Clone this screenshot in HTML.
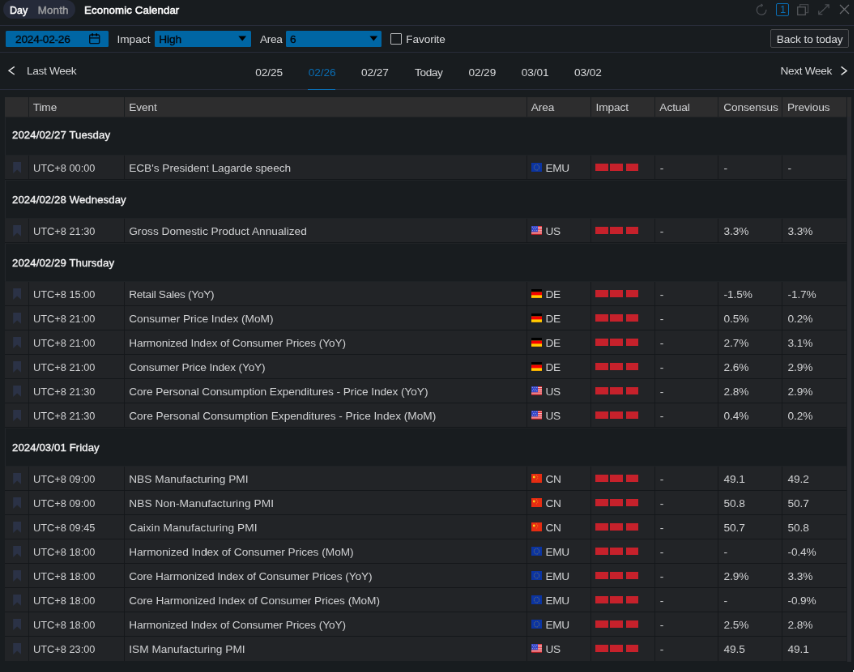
<!DOCTYPE html>
<html lang="en">
<head>
<meta charset="utf-8">
<title>Economic Calendar</title>
<style>
*{box-sizing:border-box;margin:0;padding:0}
html,body{width:854px;height:672px;overflow:hidden;background:#181c1f}
body{font-family:"Liberation Sans",sans-serif;color:#d2d3d5}
#app{position:absolute;left:0;top:0;width:1054.4px;height:829.7px;transform:scale(.81);transform-origin:0 0;background:#181c1f;font-size:13.7px;letter-spacing:-.1px;overflow:hidden;will-change:transform}
.abs{position:absolute}
.t{position:absolute;white-space:nowrap;line-height:16px;height:16px}
.b{font-weight:normal;-webkit-text-stroke:.5px;letter-spacing:.1px}
.sx{display:inline-block;transform-origin:0 50%}
.hline{position:absolute;left:0;width:100%;height:1px;background:#282c39}
/* title bar */
#pill{left:3.5px;top:-.5px;width:89px;height:23.4px;border-radius:12px;background:#252a39}
/* filter bar */
.inp{position:absolute;top:38px;height:19.6px;background:#0066a4;border-radius:1.5px}
.arrow{position:absolute;width:9.8px;height:6.2px;background:#000;clip-path:polygon(0 0,100% 0,50% 100%)}
#chk{left:481.7px;top:40.7px;width:14px;height:14.6px;border:1.2px solid #b9babc;border-radius:1px}
#btn{left:951.2px;top:36px;width:96.8px;height:22.6px;border:1px solid #4a4b4e;border-radius:2px;background:#1d2024}
/* table */
#tbl{position:absolute;left:6.2px;top:119.6px;width:1038.4px}
.hdr{display:flex;height:24px;background:#2d2d2e}
.hdr>div{height:24px;border-right:1px solid #181b1e;padding-left:4.9px;line-height:26px;color:#cfd0d2;white-space:nowrap;overflow:hidden}
.grp{height:48px;background:#181c1f;border-left:1px solid #23262a;border-top:1.5px solid #202326;border-bottom:.8px solid #1e2225;padding-left:8.2px;line-height:44.6px;font-weight:normal;-webkit-text-stroke:.38px;color:#f2f2f3;white-space:nowrap}
.grp span{display:inline-block;letter-spacing:.1px;transform:scaleX(.99);transform-origin:0 50%;font-size:13.3px}
.row{display:flex;height:30px;background:#222427;border-bottom:1px solid #14171a}
.c{height:29px;border-right:1px solid #15181b;padding-left:4.9px;padding-top:1.4px;line-height:30px;white-space:nowrap;overflow:hidden;color:#cfd0d2;position:relative}
.c0{width:29.6px;padding:0}.row .c2{letter-spacing:0}.c1{width:118.5px}.row .c1 span{display:inline-block;letter-spacing:0;transform:scaleX(.935);transform-origin:0 50%}.c2{width:496.6px}.c3,.c4,.c5,.c6,.c7{width:78.85px}.row .c5,.row .c6,.row .c7{padding-left:6.2px}.hdr .c4,.hdr .c5,.hdr .c6,.hdr .c7{padding-left:5.8px}
.hdr>div:last-child,.c7{width:78.3px;border-right:none}
.bm{position:absolute;left:9.6px;top:8px;width:10.4px;height:14px;fill:#2b3246}
.flag{position:absolute;left:5.2px;top:9.3px;width:13.1px;height:11.3px}
.c3 span{margin-left:17.8px;letter-spacing:-.4px}
.c4 i{position:absolute;top:10.8px;width:15.6px;height:8.4px;background:#c6212b}
.c4 i:nth-child(1){left:5.3px}.c4 i:nth-child(2){left:23.2px}.c4 i:nth-child(3){left:43.3px;width:14.8px}
.row:last-child{border-bottom:none}.row:last-child .c{height:30px}
#sb{position:absolute;left:1045.7px;top:119.6px;width:5px;height:697px;background:#292b30}
#sbh{position:absolute;left:1045.7px;top:119.6px;width:5px;height:24px;background:#2d2d2e}
svg.ic{position:absolute;overflow:visible;fill:none}
</style>
</head>
<body>
<div id="app">
  <!-- title bar -->
  <div id="pill" class="abs"></div>
  <div class="t b" style="left:12.1px;top:5.25px;color:#fff;font-size:13.4px"><span class="sx" style="transform:scaleX(.93)">Day</span></div>
  <div class="t b" style="left:46.8px;top:5.25px;color:#9b9c9f;font-size:13.4px"><span class="sx" style="transform:scaleX(1)">Month</span></div>
  <div class="t b" style="left:103.5px;top:5.25px;color:#fff;font-size:13.4px"><span class="sx" style="transform:scaleX(.99)">Economic Calendar</span></div>

  <svg class="ic" style="left:932.8px;top:5.3px" width="14.3" height="14.3" viewBox="0 0 14.3 14.3" stroke="#4b4e53" stroke-width="1.3"><path d="M12.9 6.9A5.8 5.8 0 1 1 7.2 1.6"/><path d="M6.5 -.1L8.4 1.6L6.3 3.3" stroke-linejoin="round"/></svg>
  <div class="abs" style="left:958px;top:4px;width:16px;height:15.6px;border:1.4px solid #0a6db3;border-radius:2px"></div>
  <div class="t" style="left:962.6px;top:3.9px;color:#0a6db3;font-size:13px;transform:rotate(.03deg)">1</div>
  <svg class="ic" style="left:983.8px;top:4.8px" width="15" height="14" viewBox="0 0 15 14" stroke-width="1.3"><path d="M3.6 3.7V.7H13.6V10.6H10.3" stroke="#404347"/><rect x=".7" y="3.7" width="9.6" height="9.6" stroke="#54575b"/></svg>
  <svg class="ic" style="left:1009.6px;top:4.8px" width="14" height="13.4" viewBox="0 0 14 13.4" stroke="#4b4e53" stroke-width="1.3"><path d="M1 12.4L13 1M8.6 .8H13.2V5.2M.8 8.2V12.6H5.4"/></svg>
  <svg class="ic" style="left:1037px;top:6.3px" width="11" height="11" viewBox="0 0 11 11" stroke="#6b6d71" stroke-width="1.2"><path d="M0 0L11 11M11 0L0 11"/></svg>
  <div class="hline" style="top:31px"></div>

  <!-- filter bar -->
  <div class="inp" style="left:7.3px;width:127.1px"></div>
  <div class="t" style="left:19.1px;top:40.9px;color:#04070b;-webkit-text-stroke:.3px;letter-spacing:-.26px">2024-02-26</div>
  <svg class="ic" style="left:110.1px;top:40.6px" width="13.4" height="13.4" viewBox="0 0 13.4 13.4" stroke="#03101c" stroke-width="1.4"><rect x=".7" y="2" width="12" height="10.6" rx="1.4"/><path d="M.7 5.9H12.7"/><path d="M4.1 .2V3.6M9.2 .2V3.6" stroke="#000" stroke-width="1.7"/></svg>
  <div class="t" style="left:144.4px;top:40.9px;color:#d6d7d9;letter-spacing:0">Impact</div>
  <div class="inp" style="left:191.4px;width:118.4px"></div>
  <div class="t" style="left:196.3px;top:40.9px;color:#04070b;-webkit-text-stroke:.3px">High</div>
  <div class="arrow" style="left:294.3px;top:44.4px"></div>
  <div class="t" style="left:320.9px;top:40.9px;color:#d6d7d9;letter-spacing:-.35px">Area</div>
  <div class="inp" style="left:353.2px;width:118.2px"></div>
  <div class="t" style="left:358px;top:40.9px;color:#04070b;-webkit-text-stroke:.3px">6</div>
  <div class="arrow" style="left:456.4px;top:44.4px"></div>
  <div id="chk" class="abs"></div>
  <div class="t" style="left:501.2px;top:40.9px;color:#d6d7d9">Favorite</div>
  <div id="btn" class="abs"></div>
  <div class="t" style="left:958.8px;top:40.9px;color:#dcdddf">Back to today</div>
  <div class="hline" style="top:64.4px"></div>

  <!-- week nav -->
  <svg class="ic" style="left:9.9px;top:82px" width="8.4" height="10.4" viewBox="0 0 8.4 10.4" stroke="#e4e5e6" stroke-width="1.4"><path d="M7.8 .4L1 5.2L7.8 10"/></svg>
  <div class="t" style="left:33px;top:80.4px;color:#d6d7d9;letter-spacing:-.34px">Last Week</div>
  <div class="t" style="left:315.2px;top:81.7px;color:#d6d7d9">02/25</div>
  <div class="t" style="left:380.7px;top:81.7px;color:#0a6db3">02/26</div>
  <div class="t" style="left:446px;top:81.7px;color:#d6d7d9">02/27</div>
  <div class="t" style="left:512px;top:81.7px;color:#d6d7d9;letter-spacing:-.4px">Today</div>
  <div class="t" style="left:578.4px;top:81.7px;color:#d6d7d9">02/29</div>
  <div class="t" style="left:643.7px;top:81.7px;color:#d6d7d9">03/01</div>
  <div class="t" style="left:709px;top:81.7px;color:#d6d7d9">03/02</div>
  <div class="t" style="left:963.5px;top:80.4px;color:#d6d7d9;letter-spacing:-.34px">Next Week</div>
  <svg class="ic" style="left:1037.9px;top:81.8px" width="8" height="10.8" viewBox="0 0 8 10.8" stroke="#e4e5e6" stroke-width="1.4"><path d="M.6 .4L7.2 5.4L.6 10.4"/></svg>
  <div class="hline" style="top:110px"></div>
  <div class="abs" style="left:380.2px;top:109.8px;width:33.4px;height:1.7px;background:#0a6db3"></div>

  <div class="abs" style="left:1052.8px;top:826.8px;width:2px;height:3px;background:#e6e6e6"></div>
  <!-- table -->
  <div id="sb"></div><div id="sbh"></div>
  <div id="tbl">
    <div class="hdr"><div class="c0"></div><div class="c1">Time</div><div class="c2">Event</div><div class="c3">Area</div><div class="c4">Impact</div><div class="c5">Actual</div><div class="c6">Consensus</div><div class="c7">Previous</div></div>
<div class="grp"><span>2024/02/27 Tuesday</span></div>
<div class="row"><div class="c c0"><svg class="bm" viewBox="0 0 10 14"><path d="M0 0H10V14L5 9.6L0 14Z"/></svg></div><div class="c c1"><span>UTC+8 00:00</span></div><div class="c c2"><span style="letter-spacing:-0.043px">ECB's President Lagarde speech</span></div><div class="c c3"><svg class="flag" viewBox="0 0 16 13" preserveAspectRatio="none"><rect width="16" height="13" fill="#0b34a2"/><circle cx="8" cy="6.5" r="3.9" fill="none" stroke="#b5a53a" stroke-opacity=".75" stroke-width="1.1" stroke-dasharray="1 1.04"/></svg><span>EMU</span></div><div class="c c4"><i></i><i></i><i></i></div><div class="c c5"><span>-</span></div><div class="c c6"><span>-</span></div><div class="c c7"><span>-</span></div></div>
<div class="grp" style="line-height:47px"><span>2024/02/28 Wednesday</span></div>
<div class="row"><div class="c c0"><svg class="bm" viewBox="0 0 10 14"><path d="M0 0H10V14L5 9.6L0 14Z"/></svg></div><div class="c c1"><span>UTC+8 21:30</span></div><div class="c c2"><span style="letter-spacing:0.017px">Gross Domestic Product Annualized</span></div><div class="c c3"><svg class="flag" viewBox="0 0 16 13" preserveAspectRatio="none"><rect width="16" height="13" fill="#f3e4e6"/><g fill="#e2262f"><rect y="0" width="16" height="1.3"/><rect y="2.4" width="16" height="1.3"/><rect y="4.8" width="16" height="1.4"/><rect y="7.4" width="16" height="1.4"/><rect y="9.8" width="16" height="1.3"/></g><rect y="11.6" width="16" height="1.4" fill="#a30d12"/><rect width="9.8" height="8.4" fill="#3545c6"/><g fill="#8b97e6"><rect x="1" y="1" width="1.4" height="1.3"/><rect x="4.2" y="1" width="1.4" height="1.3"/><rect x="7.4" y="1" width="1.4" height="1.3"/><rect x="2.6" y="3.4" width="1.4" height="1.3"/><rect x="5.8" y="3.4" width="1.4" height="1.3"/><rect x="1" y="5.8" width="1.4" height="1.3"/><rect x="4.2" y="5.8" width="1.4" height="1.3"/><rect x="7.4" y="5.8" width="1.4" height="1.3"/></g></svg><span>US</span></div><div class="c c4"><i></i><i></i><i></i></div><div class="c c5"><span>-</span></div><div class="c c6"><span>3.3%</span></div><div class="c c7"><span>3.3%</span></div></div>
<div class="grp" style="line-height:47px"><span>2024/02/29 Thursday</span></div>
<div class="row"><div class="c c0"><svg class="bm" viewBox="0 0 10 14"><path d="M0 0H10V14L5 9.6L0 14Z"/></svg></div><div class="c c1"><span>UTC+8 15:00</span></div><div class="c c2"><span style="letter-spacing:-0.300px">Retail Sales (YoY)</span></div><div class="c c3"><svg class="flag" viewBox="0 0 16 13" preserveAspectRatio="none"><rect width="16" height="13" fill="#ffcc00"/><rect width="16" height="4.2" fill="#000"/><rect y="4.2" width="16" height="4.3" fill="#f60000"/><rect y="11.6" width="16" height="1.4" fill="#f0a800"/></svg><span>DE</span></div><div class="c c4"><i></i><i></i><i></i></div><div class="c c5"><span>-</span></div><div class="c c6"><span>-1.5%</span></div><div class="c c7"><span>-1.7%</span></div></div>
<div class="row"><div class="c c0"><svg class="bm" viewBox="0 0 10 14"><path d="M0 0H10V14L5 9.6L0 14Z"/></svg></div><div class="c c1"><span>UTC+8 21:00</span></div><div class="c c2"><span style="letter-spacing:-0.016px">Consumer Price Index (MoM)</span></div><div class="c c3"><svg class="flag" viewBox="0 0 16 13" preserveAspectRatio="none"><rect width="16" height="13" fill="#ffcc00"/><rect width="16" height="4.2" fill="#000"/><rect y="4.2" width="16" height="4.3" fill="#f60000"/><rect y="11.6" width="16" height="1.4" fill="#f0a800"/></svg><span>DE</span></div><div class="c c4"><i></i><i></i><i></i></div><div class="c c5"><span>-</span></div><div class="c c6"><span>0.5%</span></div><div class="c c7"><span>0.2%</span></div></div>
<div class="row"><div class="c c0"><svg class="bm" viewBox="0 0 10 14"><path d="M0 0H10V14L5 9.6L0 14Z"/></svg></div><div class="c c1"><span>UTC+8 21:00</span></div><div class="c c2"><span style="letter-spacing:-0.120px">Harmonized Index of Consumer Prices (YoY)</span></div><div class="c c3"><svg class="flag" viewBox="0 0 16 13" preserveAspectRatio="none"><rect width="16" height="13" fill="#ffcc00"/><rect width="16" height="4.2" fill="#000"/><rect y="4.2" width="16" height="4.3" fill="#f60000"/><rect y="11.6" width="16" height="1.4" fill="#f0a800"/></svg><span>DE</span></div><div class="c c4"><i></i><i></i><i></i></div><div class="c c5"><span>-</span></div><div class="c c6"><span>2.7%</span></div><div class="c c7"><span>3.1%</span></div></div>
<div class="row"><div class="c c0"><svg class="bm" viewBox="0 0 10 14"><path d="M0 0H10V14L5 9.6L0 14Z"/></svg></div><div class="c c1"><span>UTC+8 21:00</span></div><div class="c c2"><span style="letter-spacing:-0.181px">Consumer Price Index (YoY)</span></div><div class="c c3"><svg class="flag" viewBox="0 0 16 13" preserveAspectRatio="none"><rect width="16" height="13" fill="#ffcc00"/><rect width="16" height="4.2" fill="#000"/><rect y="4.2" width="16" height="4.3" fill="#f60000"/><rect y="11.6" width="16" height="1.4" fill="#f0a800"/></svg><span>DE</span></div><div class="c c4"><i></i><i></i><i></i></div><div class="c c5"><span>-</span></div><div class="c c6"><span>2.6%</span></div><div class="c c7"><span>2.9%</span></div></div>
<div class="row"><div class="c c0"><svg class="bm" viewBox="0 0 10 14"><path d="M0 0H10V14L5 9.6L0 14Z"/></svg></div><div class="c c1"><span>UTC+8 21:30</span></div><div class="c c2"><span style="letter-spacing:-0.079px">Core Personal Consumption Expenditures - Price Index (YoY)</span></div><div class="c c3"><svg class="flag" viewBox="0 0 16 13" preserveAspectRatio="none"><rect width="16" height="13" fill="#f3e4e6"/><g fill="#e2262f"><rect y="0" width="16" height="1.3"/><rect y="2.4" width="16" height="1.3"/><rect y="4.8" width="16" height="1.4"/><rect y="7.4" width="16" height="1.4"/><rect y="9.8" width="16" height="1.3"/></g><rect y="11.6" width="16" height="1.4" fill="#a30d12"/><rect width="9.8" height="8.4" fill="#3545c6"/><g fill="#8b97e6"><rect x="1" y="1" width="1.4" height="1.3"/><rect x="4.2" y="1" width="1.4" height="1.3"/><rect x="7.4" y="1" width="1.4" height="1.3"/><rect x="2.6" y="3.4" width="1.4" height="1.3"/><rect x="5.8" y="3.4" width="1.4" height="1.3"/><rect x="1" y="5.8" width="1.4" height="1.3"/><rect x="4.2" y="5.8" width="1.4" height="1.3"/><rect x="7.4" y="5.8" width="1.4" height="1.3"/></g></svg><span>US</span></div><div class="c c4"><i></i><i></i><i></i></div><div class="c c5"><span>-</span></div><div class="c c6"><span>2.8%</span></div><div class="c c7"><span>2.9%</span></div></div>
<div class="row"><div class="c c0"><svg class="bm" viewBox="0 0 10 14"><path d="M0 0H10V14L5 9.6L0 14Z"/></svg></div><div class="c c1"><span>UTC+8 21:30</span></div><div class="c c2"><span style="letter-spacing:-0.009px">Core Personal Consumption Expenditures - Price Index (MoM)</span></div><div class="c c3"><svg class="flag" viewBox="0 0 16 13" preserveAspectRatio="none"><rect width="16" height="13" fill="#f3e4e6"/><g fill="#e2262f"><rect y="0" width="16" height="1.3"/><rect y="2.4" width="16" height="1.3"/><rect y="4.8" width="16" height="1.4"/><rect y="7.4" width="16" height="1.4"/><rect y="9.8" width="16" height="1.3"/></g><rect y="11.6" width="16" height="1.4" fill="#a30d12"/><rect width="9.8" height="8.4" fill="#3545c6"/><g fill="#8b97e6"><rect x="1" y="1" width="1.4" height="1.3"/><rect x="4.2" y="1" width="1.4" height="1.3"/><rect x="7.4" y="1" width="1.4" height="1.3"/><rect x="2.6" y="3.4" width="1.4" height="1.3"/><rect x="5.8" y="3.4" width="1.4" height="1.3"/><rect x="1" y="5.8" width="1.4" height="1.3"/><rect x="4.2" y="5.8" width="1.4" height="1.3"/><rect x="7.4" y="5.8" width="1.4" height="1.3"/></g></svg><span>US</span></div><div class="c c4"><i></i><i></i><i></i></div><div class="c c5"><span>-</span></div><div class="c c6"><span>0.4%</span></div><div class="c c7"><span>0.2%</span></div></div>
<div class="grp" style="line-height:47px"><span>2024/03/01 Friday</span></div>
<div class="row"><div class="c c0"><svg class="bm" viewBox="0 0 10 14"><path d="M0 0H10V14L5 9.6L0 14Z"/></svg></div><div class="c c1"><span>UTC+8 09:00</span></div><div class="c c2"><span style="letter-spacing:0.030px">NBS Manufacturing PMI</span></div><div class="c c3"><svg class="flag" viewBox="0 0 16 13" preserveAspectRatio="none"><rect width="16" height="13" fill="#e62c12"/><circle cx="4" cy="4.6" r="1.7" fill="#f8d21c"/><g fill="#f07a1c"><circle cx="7.8" cy="2.2" r=".7"/><circle cx="9.4" cy="3.8" r=".7"/><circle cx="9.4" cy="6" r=".7"/><circle cx="7.8" cy="7.8" r=".7"/></g></svg><span>CN</span></div><div class="c c4"><i></i><i></i><i></i></div><div class="c c5"><span>-</span></div><div class="c c6"><span>49.1</span></div><div class="c c7"><span>49.2</span></div></div>
<div class="row"><div class="c c0"><svg class="bm" viewBox="0 0 10 14"><path d="M0 0H10V14L5 9.6L0 14Z"/></svg></div><div class="c c1"><span>UTC+8 09:00</span></div><div class="c c2"><span style="letter-spacing:0.100px">NBS Non-Manufacturing PMI</span></div><div class="c c3"><svg class="flag" viewBox="0 0 16 13" preserveAspectRatio="none"><rect width="16" height="13" fill="#e62c12"/><circle cx="4" cy="4.6" r="1.7" fill="#f8d21c"/><g fill="#f07a1c"><circle cx="7.8" cy="2.2" r=".7"/><circle cx="9.4" cy="3.8" r=".7"/><circle cx="9.4" cy="6" r=".7"/><circle cx="7.8" cy="7.8" r=".7"/></g></svg><span>CN</span></div><div class="c c4"><i></i><i></i><i></i></div><div class="c c5"><span>-</span></div><div class="c c6"><span>50.8</span></div><div class="c c7"><span>50.7</span></div></div>
<div class="row"><div class="c c0"><svg class="bm" viewBox="0 0 10 14"><path d="M0 0H10V14L5 9.6L0 14Z"/></svg></div><div class="c c1"><span>UTC+8 09:45</span></div><div class="c c2"><span style="letter-spacing:0.070px">Caixin Manufacturing PMI</span></div><div class="c c3"><svg class="flag" viewBox="0 0 16 13" preserveAspectRatio="none"><rect width="16" height="13" fill="#e62c12"/><circle cx="4" cy="4.6" r="1.7" fill="#f8d21c"/><g fill="#f07a1c"><circle cx="7.8" cy="2.2" r=".7"/><circle cx="9.4" cy="3.8" r=".7"/><circle cx="9.4" cy="6" r=".7"/><circle cx="7.8" cy="7.8" r=".7"/></g></svg><span>CN</span></div><div class="c c4"><i></i><i></i><i></i></div><div class="c c5"><span>-</span></div><div class="c c6"><span>50.7</span></div><div class="c c7"><span>50.8</span></div></div>
<div class="row"><div class="c c0"><svg class="bm" viewBox="0 0 10 14"><path d="M0 0H10V14L5 9.6L0 14Z"/></svg></div><div class="c c1"><span>UTC+8 18:00</span></div><div class="c c2"><span style="letter-spacing:-0.023px">Harmonized Index of Consumer Prices (MoM)</span></div><div class="c c3"><svg class="flag" viewBox="0 0 16 13" preserveAspectRatio="none"><rect width="16" height="13" fill="#0b34a2"/><circle cx="8" cy="6.5" r="3.9" fill="none" stroke="#b5a53a" stroke-opacity=".75" stroke-width="1.1" stroke-dasharray="1 1.04"/></svg><span>EMU</span></div><div class="c c4"><i></i><i></i><i></i></div><div class="c c5"><span>-</span></div><div class="c c6"><span>-</span></div><div class="c c7"><span>-0.4%</span></div></div>
<div class="row"><div class="c c0"><svg class="bm" viewBox="0 0 10 14"><path d="M0 0H10V14L5 9.6L0 14Z"/></svg></div><div class="c c1"><span>UTC+8 18:00</span></div><div class="c c2"><span style="letter-spacing:-0.129px">Core Harmonized Index of Consumer Prices (YoY)</span></div><div class="c c3"><svg class="flag" viewBox="0 0 16 13" preserveAspectRatio="none"><rect width="16" height="13" fill="#0b34a2"/><circle cx="8" cy="6.5" r="3.9" fill="none" stroke="#b5a53a" stroke-opacity=".75" stroke-width="1.1" stroke-dasharray="1 1.04"/></svg><span>EMU</span></div><div class="c c4"><i></i><i></i><i></i></div><div class="c c5"><span>-</span></div><div class="c c6"><span>2.9%</span></div><div class="c c7"><span>3.3%</span></div></div>
<div class="row"><div class="c c0"><svg class="bm" viewBox="0 0 10 14"><path d="M0 0H10V14L5 9.6L0 14Z"/></svg></div><div class="c c1"><span>UTC+8 18:00</span></div><div class="c c2"><span style="letter-spacing:-0.046px">Core Harmonized Index of Consumer Prices (MoM)</span></div><div class="c c3"><svg class="flag" viewBox="0 0 16 13" preserveAspectRatio="none"><rect width="16" height="13" fill="#0b34a2"/><circle cx="8" cy="6.5" r="3.9" fill="none" stroke="#b5a53a" stroke-opacity=".75" stroke-width="1.1" stroke-dasharray="1 1.04"/></svg><span>EMU</span></div><div class="c c4"><i></i><i></i><i></i></div><div class="c c5"><span>-</span></div><div class="c c6"><span>-</span></div><div class="c c7"><span>-0.9%</span></div></div>
<div class="row"><div class="c c0"><svg class="bm" viewBox="0 0 10 14"><path d="M0 0H10V14L5 9.6L0 14Z"/></svg></div><div class="c c1"><span>UTC+8 18:00</span></div><div class="c c2"><span style="letter-spacing:-0.120px">Harmonized Index of Consumer Prices (YoY)</span></div><div class="c c3"><svg class="flag" viewBox="0 0 16 13" preserveAspectRatio="none"><rect width="16" height="13" fill="#0b34a2"/><circle cx="8" cy="6.5" r="3.9" fill="none" stroke="#b5a53a" stroke-opacity=".75" stroke-width="1.1" stroke-dasharray="1 1.04"/></svg><span>EMU</span></div><div class="c c4"><i></i><i></i><i></i></div><div class="c c5"><span>-</span></div><div class="c c6"><span>2.5%</span></div><div class="c c7"><span>2.8%</span></div></div>
<div class="row"><div class="c c0"><svg class="bm" viewBox="0 0 10 14"><path d="M0 0H10V14L5 9.6L0 14Z"/></svg></div><div class="c c1"><span>UTC+8 23:00</span></div><div class="c c2"><span style="letter-spacing:0.024px">ISM Manufacturing PMI</span></div><div class="c c3"><svg class="flag" viewBox="0 0 16 13" preserveAspectRatio="none"><rect width="16" height="13" fill="#f3e4e6"/><g fill="#e2262f"><rect y="0" width="16" height="1.3"/><rect y="2.4" width="16" height="1.3"/><rect y="4.8" width="16" height="1.4"/><rect y="7.4" width="16" height="1.4"/><rect y="9.8" width="16" height="1.3"/></g><rect y="11.6" width="16" height="1.4" fill="#a30d12"/><rect width="9.8" height="8.4" fill="#3545c6"/><g fill="#8b97e6"><rect x="1" y="1" width="1.4" height="1.3"/><rect x="4.2" y="1" width="1.4" height="1.3"/><rect x="7.4" y="1" width="1.4" height="1.3"/><rect x="2.6" y="3.4" width="1.4" height="1.3"/><rect x="5.8" y="3.4" width="1.4" height="1.3"/><rect x="1" y="5.8" width="1.4" height="1.3"/><rect x="4.2" y="5.8" width="1.4" height="1.3"/><rect x="7.4" y="5.8" width="1.4" height="1.3"/></g></svg><span>US</span></div><div class="c c4"><i></i><i></i><i></i></div><div class="c c5"><span>-</span></div><div class="c c6"><span>49.5</span></div><div class="c c7"><span>49.1</span></div></div>
  </div>
</div>
</body>
</html>
